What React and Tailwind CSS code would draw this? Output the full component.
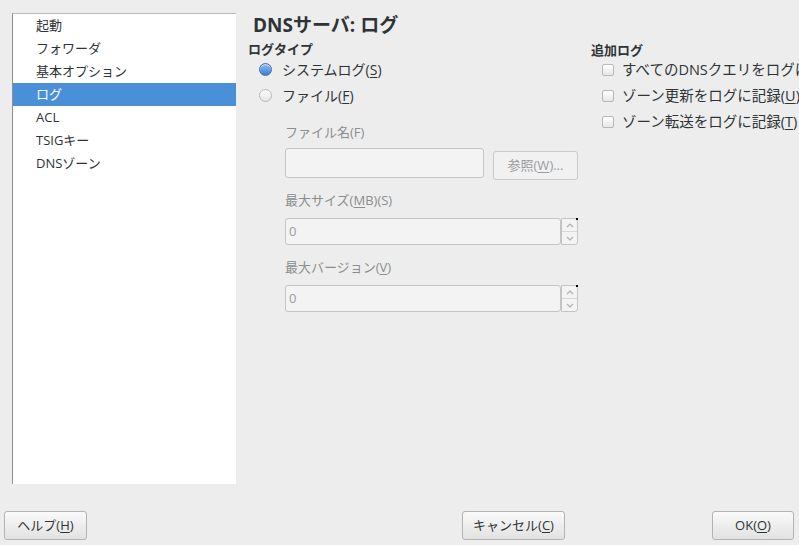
import React from 'react';

const font = { fontFamily: '"Open Sans", "Noto Sans CJK JP", sans-serif' };

const navItems = ['起動', 'フォワーダ', '基本オプション', 'ログ', 'ACL', 'TSIGキー', 'DNSゾーン'];

const Key = ({ children }) => <span className="underline underline-offset-2">{children}</span>;

const Radio = ({ checked }) =>
  checked ? (
    <span className="w-[13px] h-[13px] rounded-full border border-[#3d6fb0] bg-gradient-to-b from-[#8cbcf0] to-[#3a7fd4] shadow-[inset_0_1px_1px_rgba(255,255,255,0.6)]" />
  ) : (
    <span className="w-[13px] h-[13px] rounded-full border border-[#b8b8b8] bg-gradient-to-b from-[#ffffff] to-[#e4e4e4]" />
  );

const Checkbox = () => (
  <span className="w-[12px] h-[12px] rounded-[2px] border border-[#b8b8b8] bg-gradient-to-b from-[#ffffff] to-[#e6e6e6]" />
);

const Btn = ({ className = '', children }) => (
  <button className={`h-[29px] rounded-[3px] border border-[#b3b3b3] bg-gradient-to-b from-[#fafafa] to-[#e2e2e2] text-[13px] text-[#2e3436] flex items-center justify-center ${className}`}>
    {children}
  </button>
);

const Spin = () => (
  <div className="relative w-[17px] h-[27px] border border-[#c4c4c4] rounded-r-[3px] bg-[#f3f3f3] flex flex-col">
    <span className="absolute -top-[1px] -right-[1px] w-[2px] h-[2px] bg-black" />
    <div className="flex-1 flex items-center justify-center border-b border-[#d8d8d8]">
      <svg width="8" height="5" viewBox="0 0 8 5"><path d="M1 4 L4 1 L7 4" fill="none" stroke="#b0b0b0" strokeWidth="1.2" /></svg>
    </div>
    <div className="flex-1 flex items-center justify-center">
      <svg width="8" height="5" viewBox="0 0 8 5"><path d="M1 1 L4 4 L7 1" fill="none" stroke="#b0b0b0" strokeWidth="1.2" /></svg>
    </div>
  </div>
);

const NumField = () => (
  <div className="flex items-start">
    <div className="w-[276px] h-[27px] border border-[#c4c4c4] rounded-[3px] bg-[#f3f3f3] flex items-center pl-[3px] text-[13px] text-[#9a9c9d]">0</div>
    <Spin />
  </div>
);

export default function App() {
  return (
    <div className="w-[799px] h-[545px] bg-[#ededed] overflow-hidden flex flex-col text-[#2e3436]" style={font}>
      <div className="flex pt-[13px] pl-[12px] h-[484px]">
        <div className="w-[224px] h-[471px] bg-white border-l border-t border-l-[#8e8e8e] border-t-[#b9b9b9] shrink-0">
          {navItems.map((item) => (
            <div
              key={item}
              className={`h-[23px] flex items-center pl-[23px] text-[13px] ${item === 'ログ' ? 'bg-[#4a90d9] text-white' : 'text-[#2e3436]'}`}
            >
              {item}
            </div>
          ))}
        </div>

        <div className="flex-1 pl-[12px] min-w-0">
          <div className="ml-[5px] h-[24px] leading-[24px] text-[19px] font-bold whitespace-nowrap">DNSサーバ: ログ</div>
          <div className="flex mt-[6px]">
            <div className="w-[343px] shrink-0">
              <div className="h-[13px] leading-[12px] text-[13px] font-bold">ログタイプ</div>
              <div className="h-[26px] flex items-center pl-[11px] gap-[10px] text-[14px]">
                <Radio checked />
                <span>システムログ(<Key>S</Key>)</span>
              </div>
              <div className="h-[26px] flex items-center pl-[11px] gap-[10px] text-[14px]">
                <Radio />
                <span>ファイル(<Key>F</Key>)</span>
              </div>

              <div className="pl-[37px] text-[13px] text-[#8b8e8f]">
                <div className="mt-[16px] h-[16px] leading-[16px]">ファイル名(F)</div>
                <div className="mt-[8px] flex items-start gap-[9px]">
                  <div className="w-[199px] h-[30px] border border-[#c4c4c4] rounded-[3px] bg-[#f3f3f3]" />
                  <div className="mt-[3px] w-[85px] h-[29px] border border-[#c9c9c9] rounded-[3px] bg-[#f1f1f1] flex items-center justify-center text-[#9a9c9d]">
                    参照(<Key>W</Key>)...
                  </div>
                </div>
                <div className="mt-[12px] h-[16px] leading-[16px]">最大サイズ(<Key>M</Key>B)(S)</div>
                <div className="mt-[10px]"><NumField /></div>
                <div className="mt-[14px] h-[16px] leading-[16px]">最大バージョン(<Key>V</Key>)</div>
                <div className="mt-[10px]"><NumField /></div>
              </div>
            </div>

            <div className="whitespace-nowrap">
              <div className="h-[14px] leading-[14px] text-[13px] font-bold">追加ログ</div>
              {['すべてのDNSクエリをログに記録(A)', 'ゾーン更新をログに記録(U)', 'ゾーン転送をログに記録(T)'].map((t) => (
                <div key={t} className="h-[26px] flex items-center pl-[11px] gap-[8px] text-[14.5px]">
                  <Checkbox />
                  <span>{t.slice(0, -2)}<Key>{t.slice(-2, -1)}</Key>)</span>
                </div>
              ))}
            </div>
          </div>
        </div>
      </div>

      <div className="flex items-start pt-[27px] pl-[4px] pr-[5px]">
        <Btn className="w-[83px]">ヘルプ(<Key>H</Key>)</Btn>
        <Btn className="w-[103px] ml-[375px]">キャンセル(<Key>C</Key>)</Btn>
        <Btn className="w-[82px] ml-auto">OK(<Key>O</Key>)</Btn>
      </div>
    </div>
  );
}
